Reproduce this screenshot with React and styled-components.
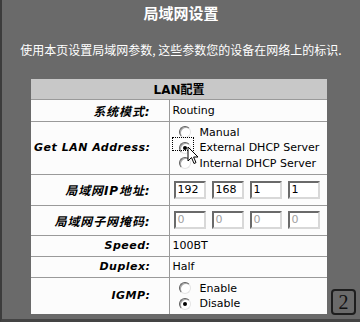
import React from "react";
import styled, { createGlobalStyle } from "styled-components";

const GlobalStyle = createGlobalStyle`
  html, body {
    margin: 0;
    padding: 0;
    background: #6a6a6a;
  }
  * {
    box-sizing: border-box;
  }
`;

const Page = styled.div`
  position: relative;
  width: 360px;
  height: 322px;
  background: #6a6a6a;
  border-left: 2px solid #3c3c3c;
  border-bottom: 3px solid #444;
  display: flex;
  flex-direction: column;
  align-items: center;
  font-family: "DejaVu Sans", "Noto Sans CJK SC", sans-serif;
  overflow: hidden;
`;

const Title = styled.h1`
  margin: 3px 0 0;
  font-size: 15px;
  line-height: 20px;
  font-weight: bold;
  color: #fff;
  font-family: "Noto Sans CJK SC", sans-serif;
`;

const Intro = styled.p`
  margin: 19px 0 0;
  font-size: 12px;
  line-height: 16px;
  color: #fff;
  font-family: "Noto Sans CJK SC", sans-serif;
  white-space: nowrap;
`;

const Table = styled.table`
  margin: 21px 0 0 -4px;
  width: 296px;
  border-collapse: collapse;
  background: #fcfcfc;
  font-size: 11px;
  color: #000;
`;

const HeadCell = styled.th`
  height: 20px;
  background: #c8c8c8;
  font-size: 12px;
  font-weight: bold;
  font-family: "DejaVu Sans", "Noto Sans CJK SC", sans-serif;
  text-align: center;
  padding: 0;
  border-bottom: 1px solid #9a9a9a;
`;

const Row = styled.tr`
  height: ${(p) => p.$h}px;
  border-bottom: 1px solid #9a9a9a;
  &:last-child {
    border-bottom: none;
  }
`;

const Label = styled.td`
  width: 138px;
  padding: 0 18px 0 0;
  text-align: right;
  font-weight: bold;
  font-style: italic;
  font-size: ${(p) => (p.$cjk ? "12px" : "11px")};
  letter-spacing: ${(p) => (p.$cjk ? "0.9px" : "0.5px")};
  border-right: 1px solid #9a9a9a;
  white-space: nowrap;
`;

const Value = styled.td`
  padding: 0 0 0 3px;
  vertical-align: middle;
  white-space: nowrap;
`;

const Options = styled.div`
  position: relative;
  display: flex;
  flex-direction: column;
  padding-left: 6px;
`;

const Option = styled.label`
  display: flex;
  align-items: center;
  gap: 9px;
  height: 15.5px;
`;

const Radio = styled.span`
  position: relative;
  width: 12px;
  height: 12px;
  border-radius: 50%;
  border: 1px solid;
  border-color: #5e5e5e #e4e4e4 #e4e4e4 #5e5e5e;
  box-shadow: inset 1px 1px 0 #a8a8a8;
  background: #fff;
  flex: none;
  &::after {
    content: "";
    display: ${(p) => (p.$on ? "block" : "none")};
    position: absolute;
    left: 3px;
    top: 3px;
    width: 4px;
    height: 4px;
    border-radius: 50%;
    background: #000;
  }
`;

const Focus = styled.span`
  position: absolute;
  left: -1px;
  top: 13px;
  width: 22px;
  height: 14px;
  border: 1px dotted #000;
`;

const Cursor = styled.svg`
  position: absolute;
  left: 14px;
  top: 22px;
`;

const Inputs = styled.div`
  display: flex;
  gap: 6px;
  padding-left: 1px;
`;

const Box = styled.span`
  width: 32px;
  height: 18px;
  border: 2px solid;
  border-color: #6a6a6a #d8d8d8 #d8d8d8 #6a6a6a;
  background: #fff;
  padding-left: 2px;
  font-size: 11px;
  line-height: 14px;
  color: ${(p) => (p.$off ? "#a0a0a0" : "#000")};
`;

const Badge = styled.div`
  position: absolute;
  right: 4px;
  bottom: 4px;
  width: 25px;
  height: 26px;
  border: 2px solid #1e1e1e;
  border-radius: 4px;
  display: flex;
  align-items: center;
  justify-content: center;
  font-family: "Liberation Serif", serif;
  font-size: 20px;
  color: #111;
`;

const lanOptions = [
  { text: "Manual", on: false },
  { text: "External DHCP Server", on: true },
  { text: "Internal DHCP Server", on: false },
];

export default function App() {
  return (
    <Page>
      <GlobalStyle />
      <Title>局域网设置</Title>
      <Intro>使用本页设置局域网参数, 这些参数您的设备在网络上的标识.</Intro>
      <Table>
        <thead>
          <tr>
            <HeadCell colSpan={2}>LAN配置</HeadCell>
          </tr>
        </thead>
        <tbody>
          <Row $h={22}>
            <Label $cjk>系统模式:</Label>
            <Value>Routing</Value>
          </Row>
          <Row $h={53}>
            <Label>Get LAN Address:</Label>
            <Value>
              <Options>
                {lanOptions.map((o) => (
                  <Option key={o.text}>
                    <Radio $on={o.on} />
                    {o.text}
                  </Option>
                ))}
                <Focus />
                <Cursor width="12" height="19" viewBox="0 0 12 19">
                  <path
                    d="M1 1 L1 15 L4.5 11.5 L7 17.5 L9 16.6 L6.6 11 L11 11 Z"
                    fill="#fff"
                    stroke="#000"
                    strokeWidth="1"
                    strokeLinejoin="round"
                  />
                </Cursor>
              </Options>
            </Value>
          </Row>
          <Row $h={31}>
            <Label $cjk>局域网IP地址:</Label>
            <Value>
              <Inputs>
                {["192", "168", "1", "1"].map((v, i) => (
                  <Box key={i}>{v}</Box>
                ))}
              </Inputs>
            </Value>
          </Row>
          <Row $h={30}>
            <Label $cjk>局域网子网掩码:</Label>
            <Value>
              <Inputs>
                {["0", "0", "0", "0"].map((v, i) => (
                  <Box key={i} $off>
                    {v}
                  </Box>
                ))}
              </Inputs>
            </Value>
          </Row>
          <Row $h={21}>
            <Label>Speed:</Label>
            <Value>100BT</Value>
          </Row>
          <Row $h={21}>
            <Label>Duplex:</Label>
            <Value>Half</Value>
          </Row>
          <Row $h={37}>
            <Label>IGMP:</Label>
            <Value>
              <Options>
                <Option>
                  <Radio />
                  Enable
                </Option>
                <Option>
                  <Radio $on />
                  Disable
                </Option>
              </Options>
            </Value>
          </Row>
        </tbody>
      </Table>
      <Badge>2</Badge>
    </Page>
  );
}
